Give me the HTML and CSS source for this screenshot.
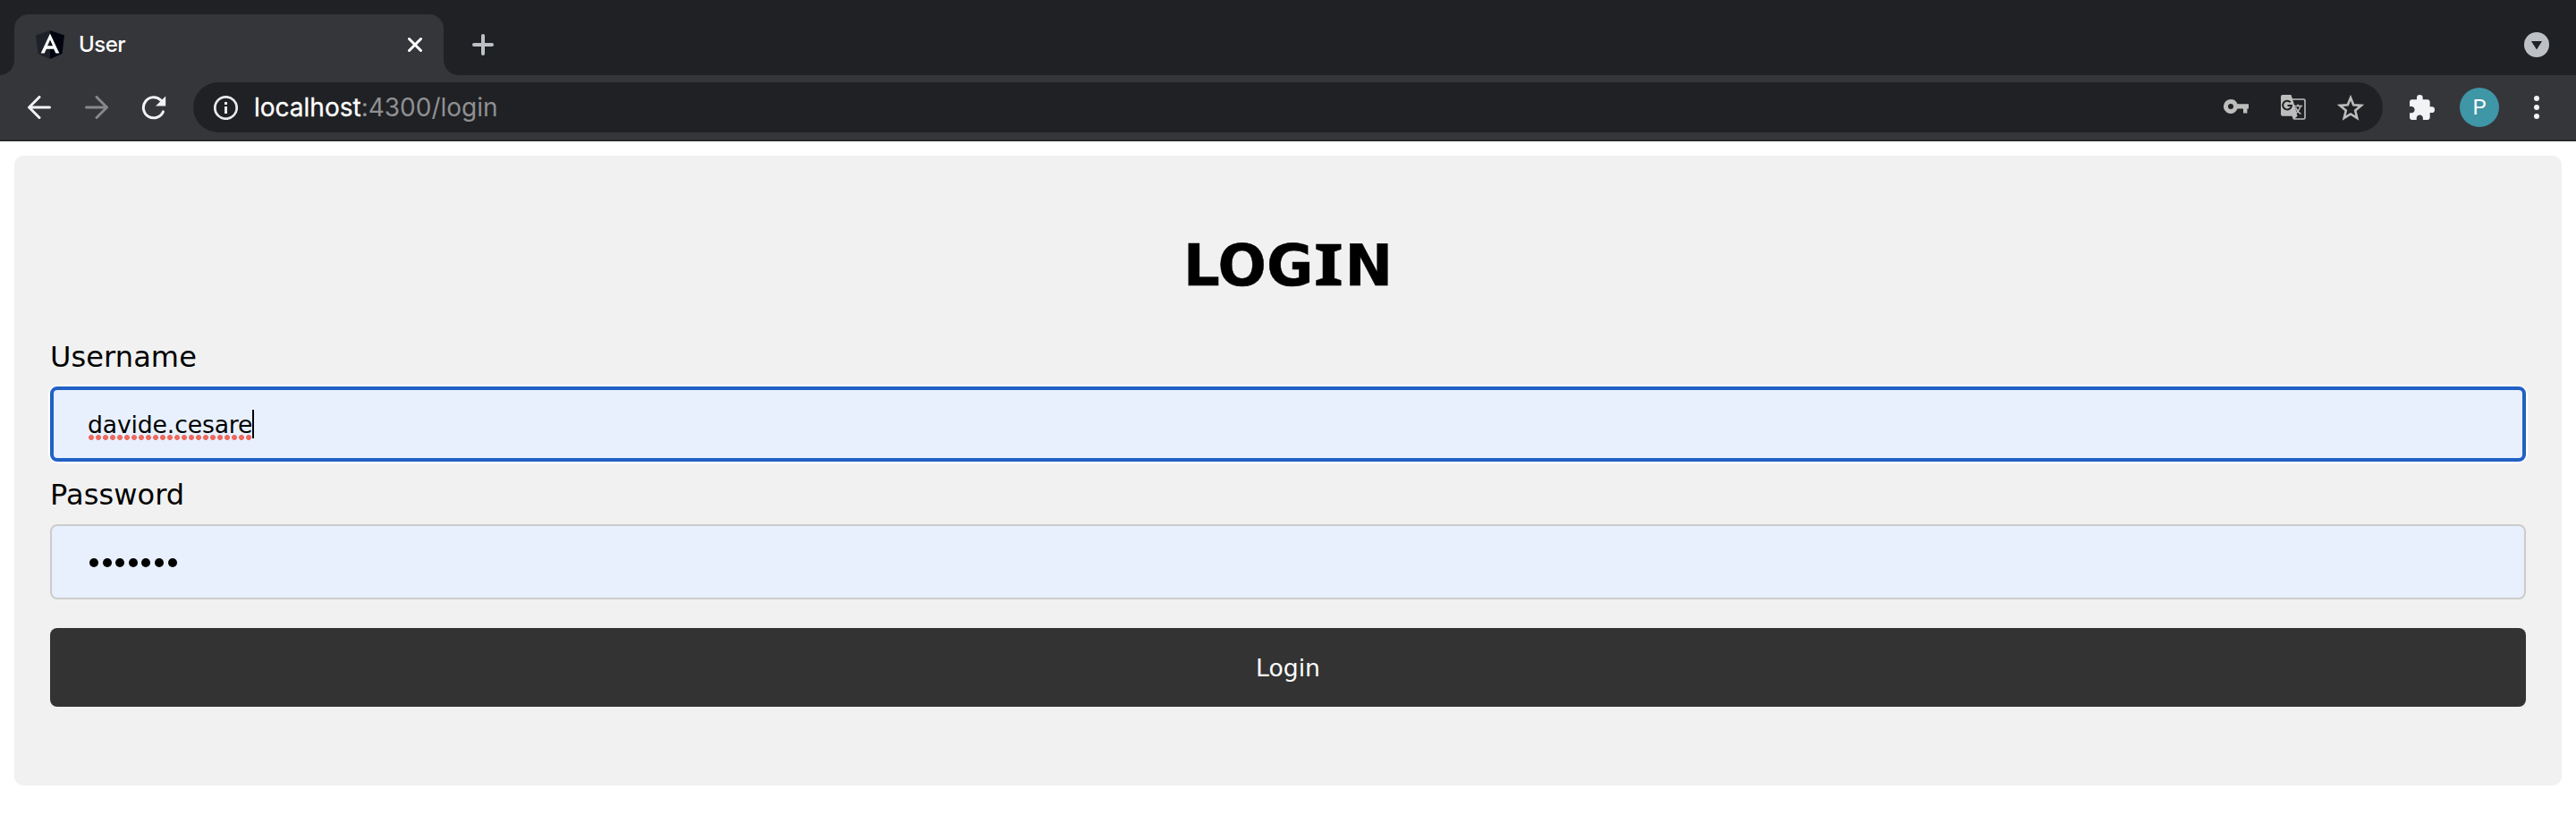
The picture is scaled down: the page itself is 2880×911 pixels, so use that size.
FILE: index.html
```html
<!DOCTYPE html>
<html lang="en">
<head>
<meta charset="utf-8">
<title>User</title>
<link rel="stylesheet" href="styles.css">
</head>
<body>
<header class="tabstrip">
  <div class="tab">
    <svg class="favicon" width="32" height="32" viewBox="0 0 32 32"><path fill="#1f212a" d="M16 0 0 5.500l2.500 20.500L16 32z"/><path fill="#02050f" d="M16 0l16 5.500-2.500 20.500L16 32z"/><path fill="#fff" fill-rule="evenodd" d="M16 3.500 5.700 25.500h4l2.200-4.700h8.200l2.200 4.700h4zM16 10.500l3 6.800h-6z"/></svg>
    <span class="tab-title">User</span>
    <svg class="tab-close" width="16" height="16" viewBox="0 0 16 16"><path d="M1.500 1.500l13 13M14.500 1.500l-13 13" stroke="#fff" stroke-width="3" stroke-linecap="round"/></svg>
  </div>
  <svg class="new-tab" width="24" height="24" viewBox="0 0 24 24"><path d="M12 2v20M2 12h20" stroke="#bdc1c6" stroke-width="4" stroke-linecap="round"/></svg>
  <svg class="tab-search" width="28" height="28" viewBox="0 0 28 28"><circle cx="14" cy="14" r="14" fill="#bdc1c6"/><path d="M8 10h12l-6 9.500z" fill="#202124"/></svg>
</header>
<nav class="toolbar">
  <svg class="nav-icon" width="26" height="26" viewBox="0 0 26 26"><path d="M13 1.500 1.500 13 13 24.500M1.500 13h23" fill="none" stroke="#f1f3f4" stroke-width="3" stroke-linecap="round"/></svg>
  <svg class="nav-icon" width="26" height="26" viewBox="0 0 26 26"><path d="M13 1.500 24.500 13 13 24.500M24.500 13h-23" fill="none" stroke="#87888a" stroke-width="3" stroke-linecap="round"/></svg>
  <svg class="nav-icon reload" width="28" height="27" viewBox="0 0 28 27"><path d="M22 5.200A11.500 11.500 0 1 0 24.400 17.800" fill="none" stroke="#f1f3f4" stroke-width="3" stroke-linecap="round"/><path d="M27.200 .5v11H16z" fill="#f1f3f4"/></svg>
  <div class="omnibox">
    <svg class="info" width="28" height="28" viewBox="0 0 28 28"><circle cx="14.500" cy="14.500" r="12.200" fill="none" stroke="#e8eaed" stroke-width="2.800"/><path d="M13 8h3v3h-3zM13 13h3v8h-3z" fill="#e8eaed"/></svg>
    <span class="url"><span class="host">localhost</span><span class="path">:4300/login</span></span>
    <div class="omni-actions">
      <svg class="key" width="28" height="16" viewBox="0 0 28 16"><path fill="#bdbdbd" fill-rule="evenodd" d="M8 0a8 8 0 1 0 7.500 10.600H22V15.400h4.400V10.600H28V5.300H15.500A8 8 0 0 0 8 0zm0 5a3 3 0 1 1 0 6 3 3 0 0 1 0-6z"/></svg>
      <svg class="translate" width="28" height="28" viewBox="0 0 28 28"><path d="M12 5h13.500a1.500 1.500 0 0 1 1.500 1.500v19a1.500 1.500 0 0 1-1.500 1.500H15" fill="none" stroke="#bdbdbd" stroke-width="1.600"/><path d="M2 0h9.500l4.500 14 2.500 9.700-4.500 4.300-1.500-4.300H2a2 2 0 0 1-2-2V2a2 2 0 0 1 2-2z" fill="#bdbdbd"/><path d="M10.700 8.200A4.900 4.900 0 1 0 12 12H7.500" fill="none" stroke="#202124" stroke-width="2"/><path d="M14.500 12.500h9.500M19.200 10.500v2M22 12.500c-1 4-3 6.500-6.500 9M16.500 14c1 3 3 5.500 6 7.500" fill="none" stroke="#bdbdbd" stroke-width="1.500"/></svg>
      <svg class="star" width="30" height="29" viewBox="0 0 30 29"><path d="M15 3.300l3.200 7.900 8.600.7-6.600 5.600 2.100 8.400L15 21.500l-7.300 4.400 2.100-8.400-6.600-5.600 8.600-.7z" fill="none" stroke="#bdbdbd" stroke-width="2.600"/></svg>
    </div>
  </div>
  <svg class="puzzle" width="28" height="28" viewBox="2 1 21 21"><path fill="#f1f3f4" d="M20.500 11H19V7c0-1.100-.9-2-2-2h-4V3.500a2.500 2.500 0 0 0-5 0V5H4c-1.100 0-1.990.9-1.990 2v3.800H3.500c1.490 0 2.700 1.210 2.700 2.700s-1.210 2.700-2.700 2.700H2V20c0 1.100.9 2 2 2h3.800v-1.500c0-1.490 1.210-2.700 2.700-2.700s2.700 1.210 2.700 2.700V22H17c1.100 0 2-.9 2-2v-4h1.500a2.500 2.500 0 0 0 0-5z"/></svg>
  <div class="avatar">P</div>
  <svg class="menu" width="6" height="26" viewBox="0 0 6 26"><g fill="#f1f3f4"><circle cx="3" cy="3" r="3"/><circle cx="3" cy="13" r="3"/><circle cx="3" cy="23" r="3"/></g></svg>
</nav>
<main class="page">
  <form class="panel">
    <h1 class="heading">LOG<span class="slab-i">I</span>N</h1>
    <label class="label">Username</label>
    <div class="field focused"><span class="value">davide.cesare</span><span class="caret"></span></div>
    <label class="label">Password</label>
    <div class="field"><span class="mask"><i></i><i></i><i></i><i></i><i></i><i></i><i></i></span></div>
    <button class="submit" type="button">Login</button>
  </form>
</main>
</body>
</html>
```

FILE: styles.css
```css
* { box-sizing: border-box; }
body { margin: 0; background: #fff; font-family: "DejaVu Sans", sans-serif; color: #000; }
svg { display: block; flex: none; }

.tabstrip { height: 84px; background: #202124; display: flex; align-items: center; padding: 16px 30px 16px 16px; }
.tab { position: relative; align-self: flex-start; width: 480px; height: 68px; background: #35363a; border-radius: 16px 16px 0 0; display: flex; align-items: center; padding: 0 24px; }
.tab::before, .tab::after { content: ""; position: absolute; bottom: 0; width: 16px; height: 16px; }
.tab::before { left: -16px; background: radial-gradient(circle at 0 0, transparent 15.500px, #35363a 16px); }
.tab::after { right: -16px; background: radial-gradient(circle at 100% 0, transparent 15.500px, #35363a 16px); }
.tab-title { margin-left: 16px; color: #fff; font: 500 24px/30px Inter, sans-serif; letter-spacing: -0.500px; }
.tab-close { margin-left: auto; }
.new-tab { margin-left: 32px; }
.tab-search { margin-left: auto; }
.tabstrip { padding-bottom: 0; }

.toolbar { height: 74px; background: #35363a; border-bottom: 2px solid #28292c; display: flex; align-items: center; padding: 0 41px 0 31px; }
.nav-icon { margin-right: 38px; }
.reload { margin: 1px 30px 0 -1px; }
.omnibox { flex: none; width: 2448px; height: 56px; border-radius: 28px; background: #202124; display: flex; align-items: center; padding: 0 21px 0 22px; }
.url { margin-left: 18px; font: 28px/34px Inter, sans-serif; }
.host { color: #fff; -webkit-text-stroke: 0.300px #fff; }
.path { color: #8f9092; }
.omni-actions { margin-left: auto; display: flex; align-items: center; }
.key { margin-bottom: 2px; }
.translate { margin-left: 36px; }
.star { margin-left: 35px; }
.puzzle { margin: 0 0 1px 30px; }
.avatar { width: 44px; height: 44px; border-radius: 50%; background: #3f96a6; color: #fff; font: 24px/44px Roboto, sans-serif; text-align: center; margin-left: 28px; }
.menu { margin-left: 39px; }

.page { padding: 16px; }
.panel { height: 704px; background: #f1f1f1; border-radius: 10px; padding: 86px 40px 0; }
.heading { margin: 0 0 46px; font-size: 64px; line-height: 74px; text-align: center; -webkit-text-stroke: 0.500px #000; }
.slab-i { display: inline-block; width: 35px; font-family: "Noto Sans", sans-serif; font-size: 65px; line-height: 60px; transform: scaleX(1.300); }
.label { display: block; height: 38px; font-size: 32px; line-height: 38px; margin-bottom: 14px; letter-spacing: 0.100px; }
.field { height: 84px; background: #e8f0fe; border: 2px solid #ccc; border-radius: 8px; display: flex; align-items: center; padding: 0 40px; margin-bottom: 18px; font-size: 26.667px; }
.focused { border: 4px solid #2160c4; box-shadow: 0 0 0 2px #fff; padding: 0 38px; }
.value { position: relative; line-height: 32px; padding-top: 1px; letter-spacing: -0.150px; }
.value::after { content: ""; position: absolute; left: 0; right: 0; bottom: -1px; height: 6px; background: radial-gradient(circle, #ee6a5f 2.700px, transparent 3.200px) 0 0 / 8px 6px repeat-x; }
.caret { width: 2px; height: 32px; background: #000; }
.mask { display: flex; gap: 4.600px; padding: 2px 0 0 2px; }
.mask i { width: 10px; height: 10px; border-radius: 50%; background: #000; }
.submit { display: block; width: 100%; height: 88px; margin-top: 32px; padding: 1px 0 0; border: 0; border-radius: 8px; background: #333; color: #fff; font: 26.667px/32px "DejaVu Sans", sans-serif; }
```
